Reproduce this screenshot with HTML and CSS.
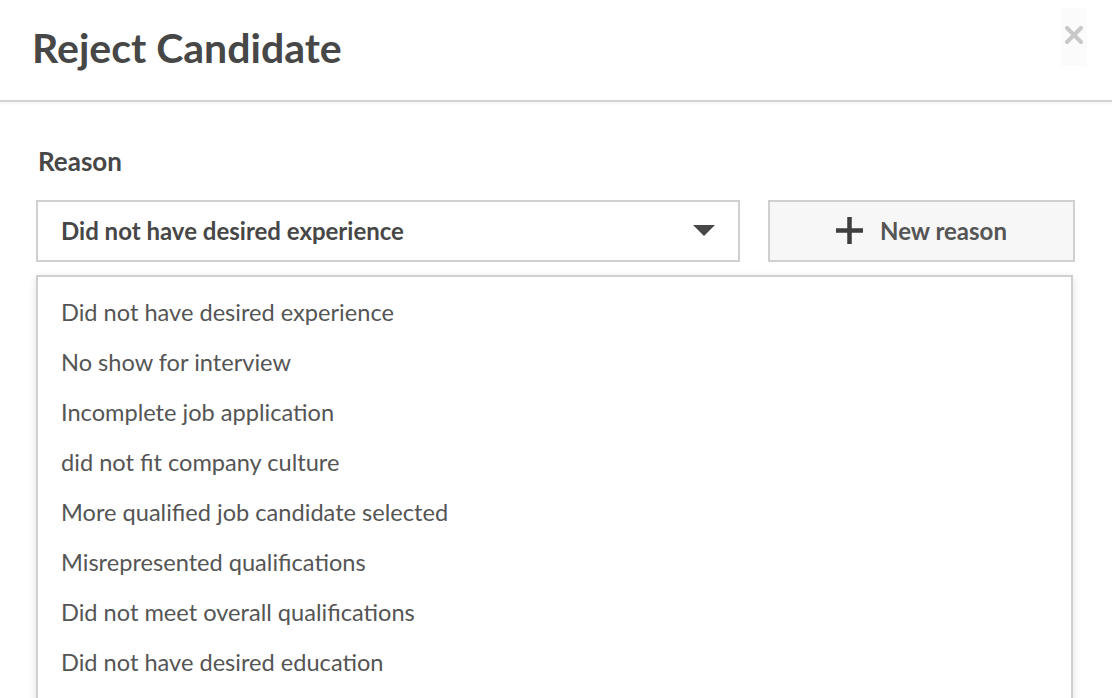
FILE: index.html
```html
<!DOCTYPE html>
<html lang="en">
<head>
    <meta charset="UTF-8">
    <meta name="viewport" content="width=device-width, initial-scale=1.0">
    <title>Reject Candidate</title>
    <link rel="stylesheet" href="styles.css">
</head>
<body>

    <div class="modal">
        <div class="modal-header">
            <h1>Reject Candidate</h1>
            <button class="close" type="button" aria-label="Close">
                <svg width="18" height="18" viewBox="0 0 18 18">
                    <path d="M2 2 L16 16 M16 2 L2 16" stroke="#c8c8c8" stroke-width="4" stroke-linecap="round"/>
                </svg>
            </button>
        </div>

        <div class="modal-body">
            <label class="field-label">Reason</label>

            <div class="reason-row">
                <div class="select">
                    <span class="select-value">Did not have desired experience</span>
                    <span class="caret"></span>
                </div>
                <button class="new-reason" type="button">
                    <svg width="27" height="27" viewBox="0 0 27 27">
                        <path d="M13.5 0 V27 M0 13.5 H27" stroke="#3f3f3f" stroke-width="4.5"/>
                    </svg>
                    <span>New reason</span>
                </button>
            </div>

            <ul class="options">
                <li>Did not have desired experience</li>
                <li>No show for interview</li>
                <li>Incomplete job application</li>
                <li>did not fit company culture</li>
                <li>More qualified job candidate selected</li>
                <li>Misrepresented qualifications</li>
                <li>Did not meet overall qualifications</li>
                <li>Did not have desired education</li>
            </ul>
        </div>
    </div>

</body>
</html>
```

FILE: styles.css
```css
body {
    margin: 0;
    font-family: 'Lato', 'Open Sans', sans-serif;
    background-color: #fff;
    color: #555;
    overflow: hidden;
}

.modal-header {
    height: 100px;
    display: flex;
    justify-content: space-between;
    align-items: flex-start;
    padding: 0 25px 0 32px;
    border-bottom: 2px solid #d2d2d2;
    box-shadow: 0 2px 3px rgba(0, 0, 0, 0.04);
}

h1 {
    margin: 0;
    padding-top: 23px;
    font-size: 41px;
    font-weight: 700;
    color: #474747;
    line-height: 50px;
}

.close {
    margin-top: 8px;
    width: 26px;
    height: 58px;
    border: none;
    padding: 0;
    background-color: #fbfbfb;
    display: flex;
    justify-content: center;
    align-items: flex-start;
    padding-top: 18px;
    cursor: pointer;
}

.modal-body {
    padding: 0 37px 0 36px;
}

.field-label {
    display: block;
    margin-top: 44px;
    margin-left: 2px;
    font-size: 26px;
    font-weight: 700;
    color: #474747;
    line-height: 30px;
}

.reason-row {
    display: flex;
    gap: 28px;
    margin-top: 24px;
}

.select {
    width: 704px;
    height: 62px;
    box-sizing: border-box;
    border: 2px solid #d0d0d0;
    display: flex;
    align-items: center;
    justify-content: space-between;
    padding: 0 23px 2px 23px;
}

.select-value {
    font-size: 24px;
    font-weight: 700;
    color: #474747;
}

.caret {
    width: 0;
    height: 0;
    border-left: 11px solid transparent;
    border-right: 11px solid transparent;
    border-top: 11px solid #474747;
}

.new-reason {
    flex: 1;
    height: 62px;
    box-sizing: border-box;
    border: 2px solid #d0d0d0;
    background-color: #f7f7f7;
    display: flex;
    align-items: center;
    justify-content: center;
    gap: 17px;
    padding-bottom: 2px;
    font-family: inherit;
    font-size: 24px;
    font-weight: 700;
    color: #555;
    cursor: pointer;
}

.options {
    list-style: none;
    margin: 13px 2px 0 0;
    padding: 10px 0 40px 0;
    border: 2px solid #d0d0d0;
    box-shadow: 0 2px 8px rgba(0, 0, 0, 0.12);
}

.options li {
    padding-left: 23px;
    line-height: 50px;
    font-size: 23.6px;
    color: #555;
}
```
